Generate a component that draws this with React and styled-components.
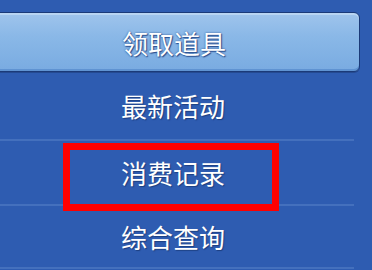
import React from 'react';
import styled, { createGlobalStyle } from 'styled-components';

const items = ['最新活动', '消费记录', '综合查询'];

const App = () => {
  return (
    <>
      <GlobalStyle />
      <Panel>
        <ButtonRow>
          <MainButton>领取道具</MainButton>
        </ButtonRow>
        <Menu>
          {items.map((label, i) => (
            <MenuItem key={label} $height={[67, 63, 61][i]}>
              <Label>{label}</Label>
              {i === 1 && <Highlight />}
            </MenuItem>
          ))}
        </Menu>
      </Panel>
    </>
  );
};

export default App;

const GlobalStyle = createGlobalStyle`
  html, body {
    margin: 0;
    padding: 0;
    background: #2e5cb1;
  }
  body {
    font-family: "Noto Sans CJK SC", "Noto Sans", sans-serif;
  }
`;

const Panel = styled.div`
  width: 372px;
  height: 270px;
  overflow: hidden;
  background: #2e5cb1;
  padding-top: 12px;
  box-sizing: border-box;
`;

const ButtonRow = styled.div`
  display: flex;
  margin-left: -12px;
  width: 372px;
`;

const MainButton = styled.div`
  flex: 1;
  height: 60px;
  display: flex;
  align-items: center;
  justify-content: center;
  padding-top: 1px;
  box-sizing: border-box;
  border: 1px solid #1b3a78;
  border-radius: 6px;
  box-shadow: inset 0 2px 0 #b9d5f2, inset 0 -2px 0 #5f93d2, 0 1px 0 #244a92;
  background: linear-gradient(#9fc4ec 0%, #8ab8e7 40%, #79abe1 100%);
  color: #ffffff;
  font-size: 26px;
  text-shadow: 0 0 2px #2a4f8f, 1px 1px 1px #2a4f8f;
`;

const Menu = styled.div`
  display: flex;
  flex-direction: column;
  width: 354px;
`;

const MenuItem = styled.div`
  position: relative;
  height: ${(p) => p.$height}px;
  display: flex;
  align-items: center;
  justify-content: center;
  padding-right: 8px;
  border-bottom: 2px solid #4470bd;
  box-sizing: content-box;
`;

const Label = styled.span`
  color: #ffffff;
  font-size: 26px;
  text-shadow: 1px 1px 1px #1d3f80;
`;

const Highlight = styled.div`
  position: absolute;
  left: 63px;
  top: 2px;
  width: 216px;
  height: 68px;
  border: 7px solid #ff0000;
  box-sizing: border-box;
  pointer-events: none;
`;
